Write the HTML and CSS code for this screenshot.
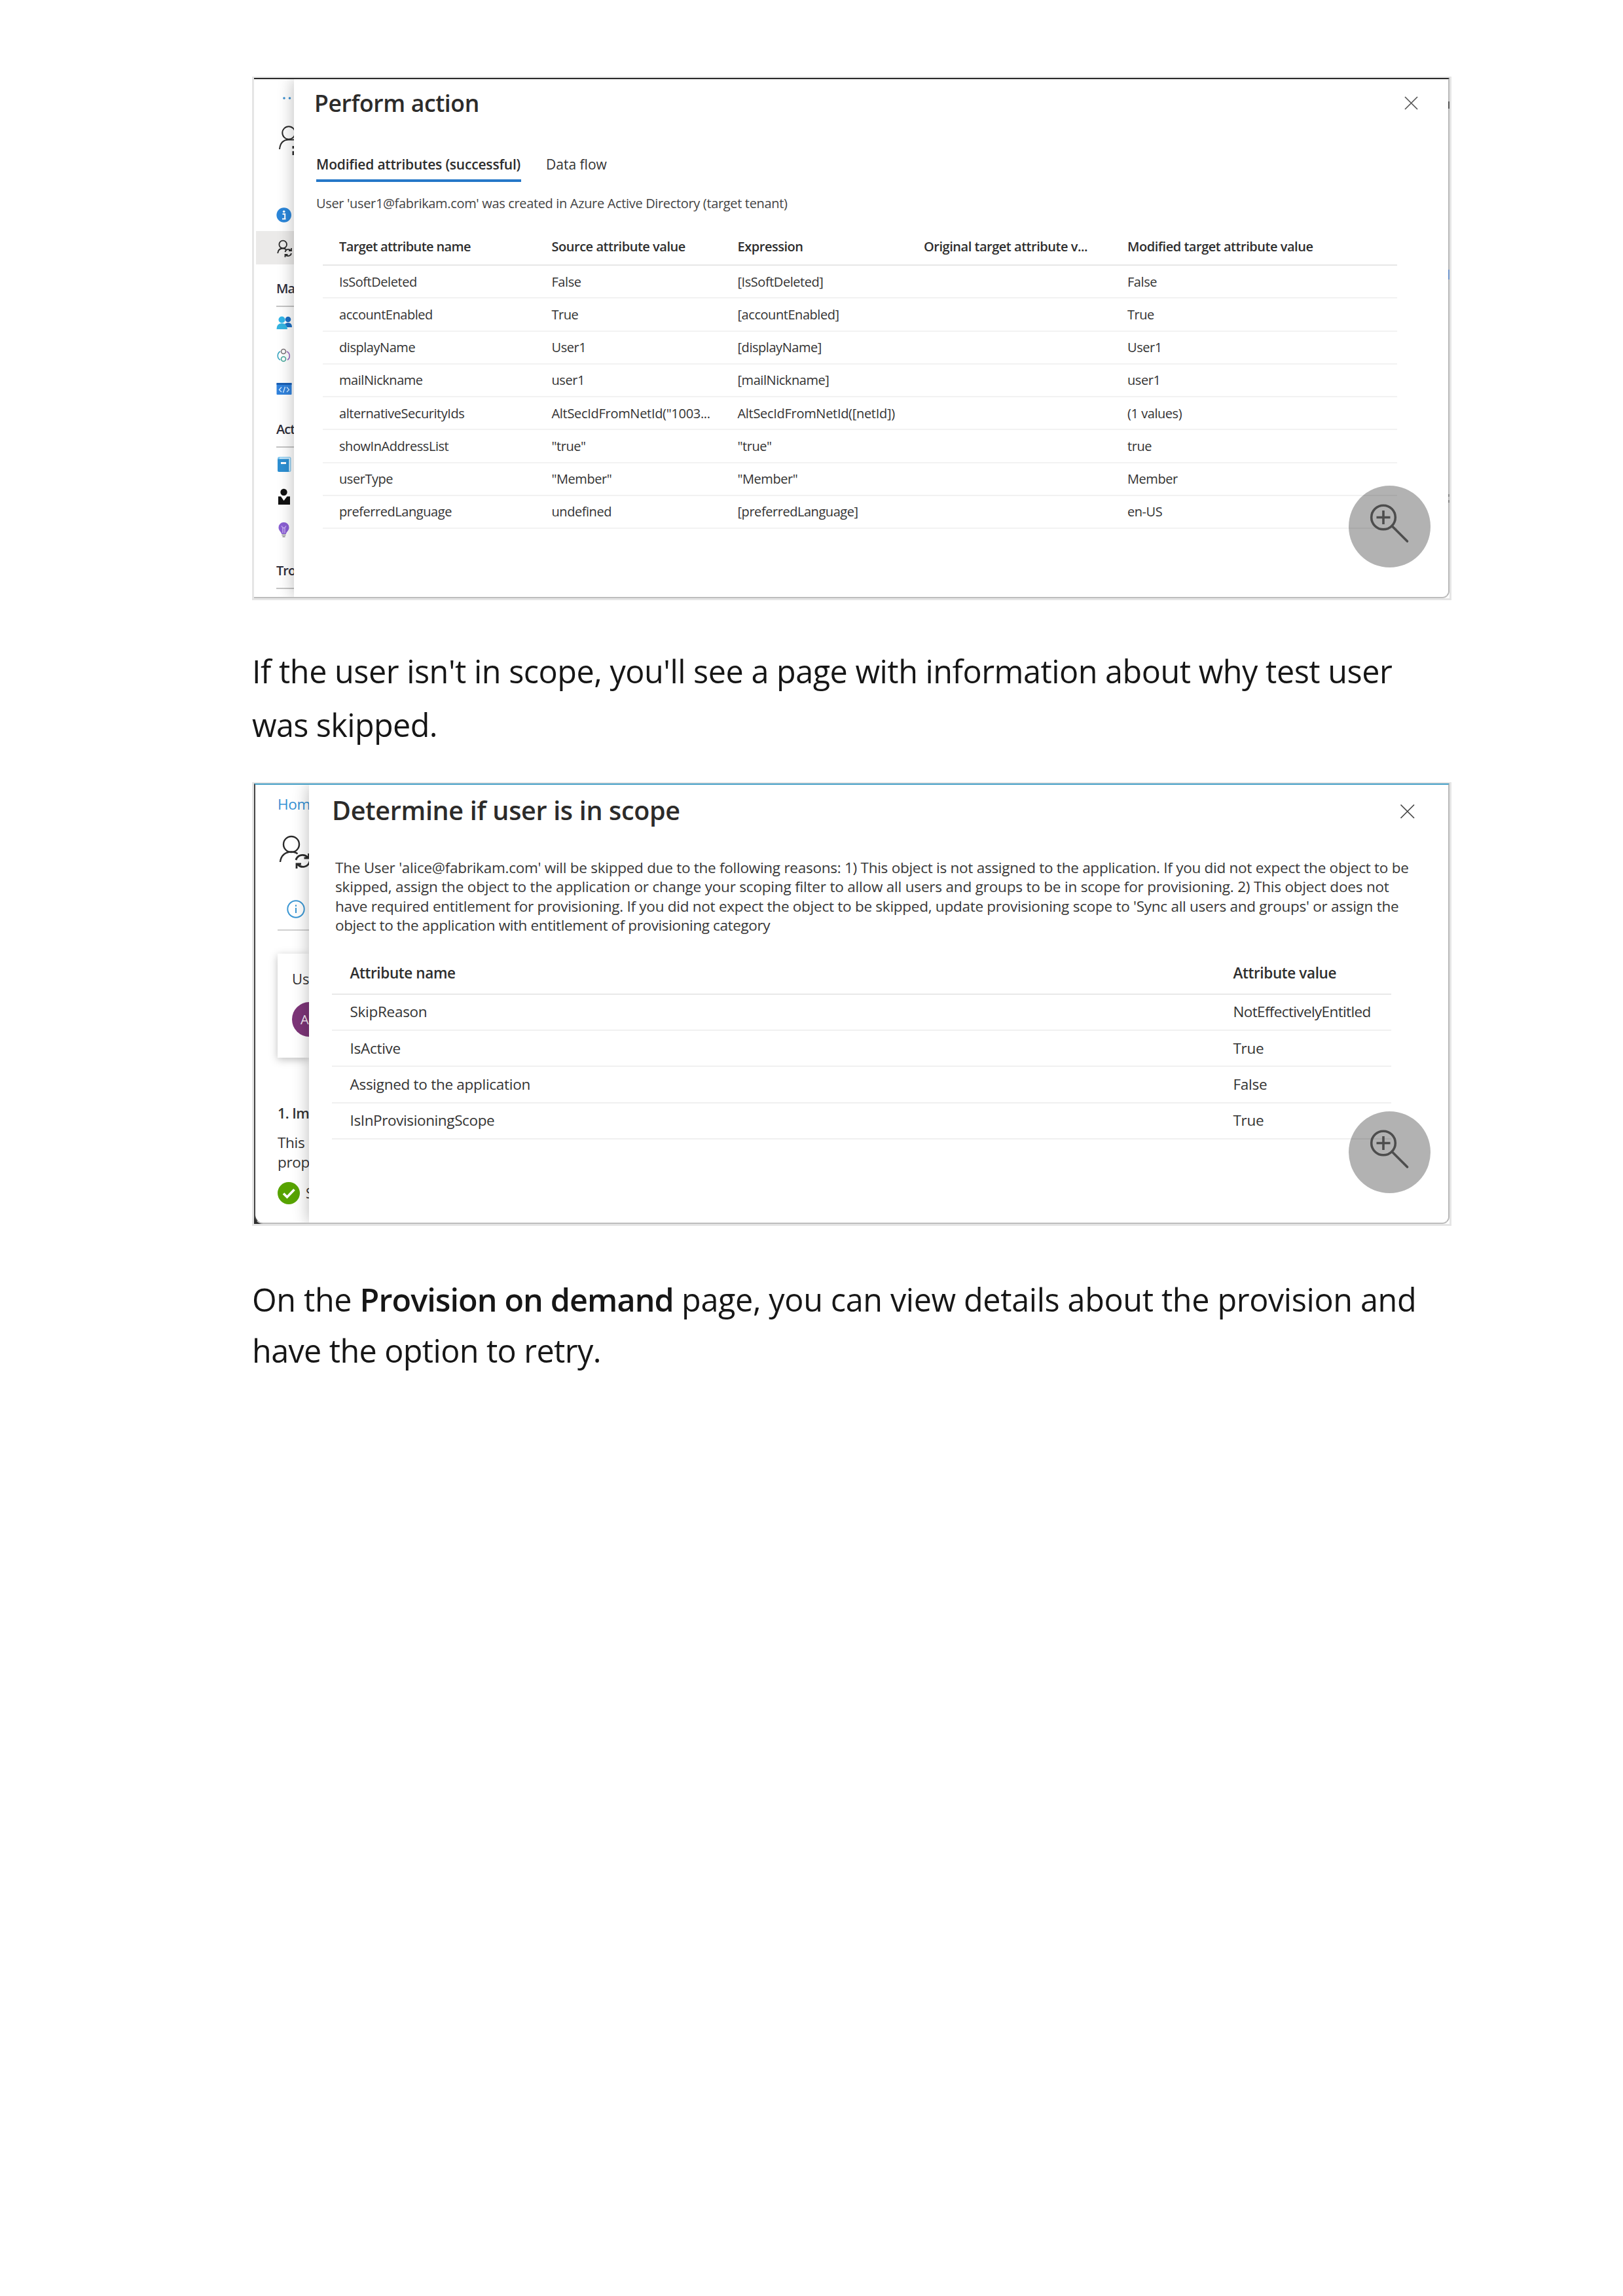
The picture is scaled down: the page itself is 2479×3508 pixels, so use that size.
FILE: index.html
```
<!DOCTYPE html>
<html lang="en">
<head>
<meta charset="utf-8">
<title>Provision on demand</title>
<link rel="stylesheet" href="styles.css">
</head>
<body>
<main class="page">

  <figure class="shot shot-action">
    <div class="window">
      <aside class="side">
        <svg class="side-top" width="58" height="182" viewBox="0 0 58 182" fill="none" stroke="#2b2b2b" stroke-width="2">
          <g fill="#3a8fd0" stroke="none"><circle cx="43" cy="29" r="1.8"/><circle cx="51.5" cy="29" r="1.8"/></g>
          <circle cx="50" cy="82" r="9.7"/><path d="M36 107C37 97 42 92.500 50 92.500H58"/><path d="M57 102v4M57 110v6" stroke-width="3"/>
        </svg>
        <div class="side-item"><svg width="58" height="50" viewBox="0 0 58 50"><circle cx="42.700" cy="25.500" r="11.300" fill="#2b86d9"/><circle cx="42.700" cy="20.300" r="1.800" fill="#fff"/><path d="M40.500 24h3.700v7M40 31.500h5.500" stroke="#fff" stroke-width="2" fill="none"/></svg></div>
        <div class="side-item selected"><svg width="58" height="50" viewBox="0 0 58 50" fill="none" stroke="#2b2b2b" stroke-width="1.800"><circle cx="41.200" cy="20.500" r="5.800"/><path d="M33.200 34c.5-5 3.500-7.500 8-7.500q3 0 5 2"/><path d="M44.500 32a5 5 0 0 1 8.500-2.500M54 34a5 5 0 0 1-8.500 2.500M54 26v4h-4M44.500 40v-4h4"/></svg></div>
        <div class="side-heading"><span>Ma</span></div>
        <div class="side-item"><svg width="58" height="50" viewBox="0 0 58 50"><circle cx="49" cy="20" r="4.300" fill="#1d6fc4"/><path d="M43 32q0-7 6-7t6 7z" fill="#1d6fc4"/><circle cx="39.500" cy="20.500" r="5" fill="#32b6e8"/><path d="M31.500 35q0-9 8-9t8.500 9z" fill="#35b4e0"/></svg></div>
        <div class="side-item"><svg width="58" height="50" viewBox="0 0 58 50" fill="none" stroke-width="1.600"><path d="M37 19a7.500 7.500 0 0 0 0 13" stroke="#3aa5c0"/><path d="M47 19a7.500 7.500 0 0 1 1 13" stroke="#9a6fc0"/><circle cx="42" cy="19" r="3.500" stroke="#7a7378"/><circle cx="42" cy="30.500" r="3.500" stroke="#43a79a"/></svg></div>
        <div class="side-item"><svg width="58" height="50" viewBox="0 0 58 50" fill="none"><rect x="31.500" y="16" width="23" height="18" rx="1" fill="#3182dc"/><path d="M31.500 17.500h23" stroke="#1b5fb4" stroke-width="3"/><path d="M39 22.500l-3.500 4 3.500 3.500M47 22.500l3.500 4-3.500 3.500M44.500 22l-3 9" stroke="#cfe8ff" stroke-width="1.400"/></svg></div>
        <div class="side-heading"><span>Act</span></div>
        <div class="side-item"><svg width="58" height="50" viewBox="0 0 58 50"><rect x="33" y="14" width="20.500" height="23" rx="2.500" fill="#7cc4ee"/><path d="M36 16h15.500v19.500" stroke="#e7f6ff" stroke-width="1.300" fill="none"/><path d="M33 17.500h17V37H35.500q-2.500 0-2.500-2.500z" fill="#2d8fd2"/><path d="M38 23.500h8" stroke="#fff" stroke-width="3"/></svg></div>
        <div class="side-item"><svg width="58" height="50" viewBox="0 0 58 50" fill="#111"><circle cx="42.500" cy="18" r="5.200"/><path d="M34 24.500h4l4.500 6.500 5-6.500H52V37H34z"/></svg></div>
        <div class="side-item"><svg width="58" height="50" viewBox="0 0 58 50"><path d="M42.500 14a8 8 0 0 1 8 8c0 5-4 6-4.700 10h-6.600c-.7-4-4.700-5-4.700-10a8 8 0 0 1 8-8z" fill="#8a5fd3"/><path d="M39 19.500l2 3h3l2-3M41 22.500v8M44 22.500v8" stroke="#cdb4f5" stroke-width="1.300" fill="none"/><path d="M39.500 33.500h6M40.500 36h4" stroke="#a5a5a5" stroke-width="1.800"/></svg></div>
        <div class="side-heading"><span>Tro</span></div>
      </aside>
      <section class="panel">
        <header class="panel-head">
          <h2>Perform action</h2>
          <svg class="close" width="22" height="22" viewBox="0 0 22 22" stroke="#555" stroke-width="1.700"><path d="M1 1l19 19M20 1L1 20"/></svg>
        </header>
        <nav class="tabs"><span class="tab active">Modified attributes (successful)</span><span class="tab">Data flow</span></nav>
        <p class="message">User 'user1@fabrikam.com' was created in Azure Active Directory (target tenant)</p>
        <div class="grid">
          <div class="row head"><span>Target attribute name</span><span>Source attribute value</span><span>Expression</span><span>Original target attribute v...</span><span>Modified target attribute value</span></div>
          <div class="row"><span>IsSoftDeleted</span><span>False</span><span>[IsSoftDeleted]</span><span></span><span>False</span></div>
          <div class="row"><span>accountEnabled</span><span>True</span><span>[accountEnabled]</span><span></span><span>True</span></div>
          <div class="row"><span>displayName</span><span>User1</span><span>[displayName]</span><span></span><span>User1</span></div>
          <div class="row"><span>mailNickname</span><span>user1</span><span>[mailNickname]</span><span></span><span>user1</span></div>
          <div class="row"><span>alternativeSecurityIds</span><span class="function">AltSecIdFromNetId("1003...</span><span class="function">AltSecIdFromNetId([netId])</span><span></span><span>(1 values)</span></div>
          <div class="row"><span>showInAddressList</span><span>"true"</span><span>"true"</span><span></span><span>true</span></div>
          <div class="row"><span>userType</span><span>"Member"</span><span>"Member"</span><span></span><span>Member</span></div>
          <div class="row"><span>preferredLanguage</span><span>undefined</span><span>[preferredLanguage]</span><span></span><span>en-US</span></div>
        </div>
      </section>
    </div>
    <div class="edge-marks"></div>
    <div class="zoom"><svg width="125" height="125" viewBox="0 0 125 125" fill="none" stroke="#4d4d4d" stroke-width="3.600"><circle cx="53" cy="48.500" r="18.300"/><path d="M42.500 48.500h21M53 38v21"/><path d="M66 61.500l23.500 23.500" stroke-linecap="round"/></svg></div>
  </figure>

  <p class="copy copy-scope">If the user isn't in scope, you'll see a page with information about why test user<br><span class="short-line">was skipped.</span></p>

  <figure class="shot shot-scope">
    <div class="window">
      <aside class="side">
        <div class="crumb">Hom</div>
        <svg class="side-user" width="81" height="64" viewBox="0 0 81 64" fill="none" stroke="#2b2b2b" stroke-width="2.400"><circle cx="54" cy="21" r="12"/><path d="M37 48c1-10 8-15.500 17-15.500q6 0 9.500 3"/><path d="M61 45a10.500 10.500 0 0 1 18-4M82 47a10.500 10.500 0 0 1-18 5M80.500 35v7h-7M62 58v-7h7" stroke-width="2.800"/></svg>
        <div class="side-info"><svg width="28" height="28" viewBox="0 0 28 28" fill="none" stroke="#3b97d3" stroke-width="2"><circle cx="14" cy="14" r="12.700"/><path d="M14 12v8M14 7.500v2.500"/></svg></div>
        <div class="card"><span>Us</span><div class="avatar">A</div></div>
        <div class="step">1. Im</div>
        <div class="step-text">This<br>prop</div>
        <div class="status"><svg width="34" height="34" viewBox="0 0 34 34"><circle cx="17" cy="17" r="17" fill="#57a300"/><path d="M9 17.500l5.500 5.500L25.500 11.500" fill="none" stroke="#fff" stroke-width="3.600"/></svg><span>S</span></div>
      </aside>
      <section class="panel">
        <header class="panel-head">
          <h2>Determine if user is in scope</h2>
          <svg class="close" width="24" height="24" viewBox="0 0 24 24" stroke="#444" stroke-width="1.700"><path d="M1.500 1.500l20.500 20.500M22 1.500L1.500 22"/></svg>
        </header>
        <p class="message">The User 'alice@fabrikam.com' will be skipped due to the following reasons: 1) This object is not assigned to the application. If you did not expect the object to be<br><span class="looser">skipped, assign the object to the application or change your scoping filter to allow all users and groups to be in scope for provisioning. 2) This object does not</span><br>have required entitlement for provisioning. If you did not expect the object to be skipped, update provisioning scope to 'Sync all users and groups' or assign the<br><span class="tighter">object to the application with entitlement of provisioning category</span></p>
        <div class="grid">
          <div class="row head"><span>Attribute name</span><span>Attribute value</span></div>
          <div class="row"><span>SkipReason</span><span class="entitled">NotEffectivelyEntitled</span></div>
          <div class="row"><span>IsActive</span><span>True</span></div>
          <div class="row"><span>Assigned to the application</span><span>False</span></div>
          <div class="row"><span class="tighter">IsInProvisioningScope</span><span>True</span></div>
        </div>
      </section>
    </div>
    <div class="zoom"><svg width="125" height="125" viewBox="0 0 125 125" fill="none" stroke="#4d4d4d" stroke-width="3.600"><circle cx="53" cy="48.500" r="18.300"/><path d="M42.500 48.500h21M53 38v21"/><path d="M66 61.500l23.500 23.500" stroke-linecap="round"/></svg></div>
  </figure>

  <p class="copy copy-retry">On the <strong>Provision on demand</strong> page, you can view details about the provision and<br><span class="short-line">have the option to retry.</span></p>

</main>
</body>
</html>
```

FILE: styles.css
```
* { box-sizing: border-box; }
body {
  margin: 0;
  background: #fff;
  color: #333;
  font-family: "Open Sans", "Noto Sans", sans-serif;
  white-space: nowrap;
}
h2, p, figure { margin: 0; }
svg { display: block; flex: none; }

.page {
  width: 2479px;
  height: 3508px;
  padding: 117px 262px 0 385px;
  overflow: hidden;
}

/* Screenshot frames */
.shot {
  position: relative;
  width: 1832px;
  border: 3px solid #e5e5e5;
  border-top-width: 2px;
}
.window {
  display: flex;
  height: 100%;
  overflow: hidden;
  border-right: 2px solid #b9b9b9;
  border-bottom: 2px solid #bdbdbd;
  border-bottom-right-radius: 11px;
  background: #fff;
}
.side { flex: none; overflow: hidden; }
.panel {
  position: relative;
  flex: 1;
  background: #fff;
  box-shadow: -2px 0 22px rgba(0, 0, 0, .24);
}
.panel-head { display: flex; justify-content: space-between; }
.panel-head h2 { font-weight: 600; line-height: 50px; color: #2c2b2a; }
.row { display: grid; align-items: center; }
.row.head { font-weight: 600; color: #2e2e2e; }

.zoom {
  position: absolute;
  width: 125px;
  height: 125px;
  border-radius: 50%;
  background: rgba(0, 0, 0, .3);
}

/* Perform action */
.shot-action { height: 800px; }
.shot-action .window { border-top: 2px solid #2a2a2a; padding-left: 3px; }
.shot-action .side { width: 58px; }
.side-item { height: 50.3px; }
.side-item.selected { background: #ebeae9; }
.side-heading {
  height: 64.6px;
  margin-left: 31px;
  padding-top: 21px;
  font-size: 20px;
  letter-spacing: -1px;
  line-height: 32px;
  color: #2e2e3a;
}
.side-heading span { display: block; height: 44px; border-bottom: 2px solid #c4c4c4; font-weight: 600; }
.shot-action .panel { padding: 11px 0 0 31px; }
.shot-action h2 { font-size: 35.5px; letter-spacing: -.36px; }
.shot-action .close { margin: 15px 45px 0 0; }
.tabs { display: flex; gap: 38px; margin: 53px 0 0 3px; font-size: 21px; line-height: 32px; }
.tab { height: 43px; }
.tab.active { width: 313px; border-bottom: 4px solid #2577c8; font-weight: 600; letter-spacing: -.2px; color: #2c2c2c; }
.shot-action .message { margin: 18px 0 0 3px; font-size: 20px; line-height: 30px; letter-spacing: -.34px; color: #444; }
.shot-action .grid { width: 1641px; margin: 21px 0 0 13px; font-size: 20px; letter-spacing: -.45px; }
.shot-action .row {
  grid-template-columns: 324.500px 284px 284.500px 311px 1fr;
  height: 50.250px;
  padding-left: 25px;
  border-bottom: 2px solid #f2f2f2;
}
.shot-action .row.head { height: 59px; padding-top: 1px; border-color: #e6e6e6; letter-spacing: -.47px; }
.shot-action .row.head span:first-child { letter-spacing: -.6px; }
.function { letter-spacing: -.3px; }
.shot-action .zoom { left: 1672px; top: 623px; }
.edge-marks {
  position: absolute;
  right: 0;
  top: 36px;
  width: 2px;
  height: 630px;
  background: linear-gradient(#555 11px, transparent 11px 257px, #6f95cc 257px 272px, transparent 272px 600px, #888 600px 604px, transparent 604px 609px, #888 609px 613px, transparent 613px);
}

/* Body copy */
.copy { font-size: 48.500px; color: #161616; }
.copy strong { font-weight: 600; letter-spacing: -.9px; }
.copy-scope { margin: 67px 0 47px; line-height: 82px; letter-spacing: -.47px; }
.copy-retry { margin-top: 73px; line-height: 78px; letter-spacing: -.35px; }
.short-line { letter-spacing: -.6px; }

/* Determine if user is in scope */
.shot-scope { height: 678px; background: linear-gradient(to right, #2f2f2f 20px, #fff 20px); }
.shot-scope .window { border-top: 2px solid #3f9cc4; border-left: 2px solid #444; padding-left: 1px; border-bottom-left-radius: 14px; }
.shot-scope .side { width: 81px; padding: 0 0 0 33px; }
.crumb { padding-top: 14px; font-size: 22.500px; line-height: 32px; letter-spacing: -.3px; color: #3490d4; }
.side-user { margin: 24px 0 0 -33px; }
.side-info { height: 89px; padding: 42px 0 0 14px; border-bottom: 2px solid #cfcfcf; }
.card {
  height: 159px;
  margin-top: 35px;
  padding: 21px 0 0 22px;
  font-size: 22px;
  line-height: 34px;
  box-shadow: 0 3px 12px rgba(0, 0, 0, .26);
}
.avatar {
  width: 53px;
  height: 53px;
  margin-top: 19px;
  padding-left: 13px;
  border-radius: 50%;
  background: #7d3578;
  color: #f5e9f5;
  font-size: 20px;
  line-height: 54px;
}
.step { margin-top: 69px; font-size: 21.500px; line-height: 32px; font-weight: 600; letter-spacing: -.5px; }
.step-text { margin-top: 14px; font-size: 22.500px; line-height: 30px; letter-spacing: -.3px; }
.status { display: flex; align-items: center; gap: 9px; margin-top: 15px; font-size: 21px; }
.shot-scope .panel { padding: 14px 0 0 35px; }
.shot-scope h2 { font-size: 39.500px; letter-spacing: -.32px; }
.shot-scope .close { margin: 15px 50px 0 0; }
.shot-scope .message { margin: 47.500px 0 0 5px; font-size: 22.500px; line-height: 29.500px; letter-spacing: -.26px; color: #383838; }
.looser { letter-spacing: -.19px; }
.tighter { letter-spacing: -.38px; }
.shot-scope .grid { width: 1618px; margin: 26.500px 0 0; font-size: 22.500px; letter-spacing: -.28px; }
.shot-scope .row {
  grid-template-columns: 1349px 1fr;
  height: 55.350px;
  padding: 0 0 1px 27.500px;
  border-bottom: 2px solid #f0f0f0;
}
.shot-scope .row.head { height: 64.500px; padding-bottom: 0; border-color: #e9e9e9; letter-spacing: -.38px; }
.shot-scope .row .entitled { letter-spacing: -.64px; }
.shot-scope .zoom { left: 1672px; top: 501px; }
```
